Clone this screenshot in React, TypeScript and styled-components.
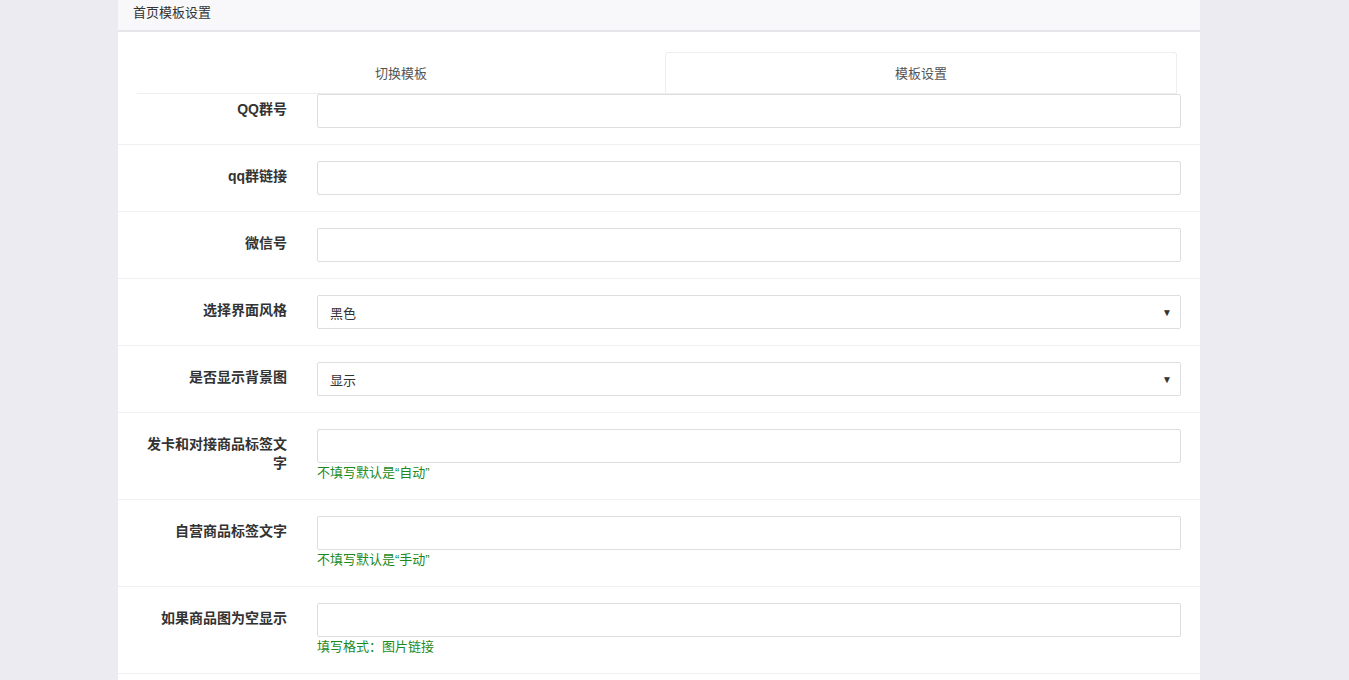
import React from "react";
import styled, { createGlobalStyle } from "styled-components";

const Global = createGlobalStyle`
  html, body { margin: 0; padding: 0; background: #edebf2; }
  body { font-family: "Liberation Sans", "Noto Sans CJK SC", sans-serif; font-size: 13px; color: #333; }
`;

const Panel = styled.div`
  margin-left: 118px;
  width: 1082px;
  background: #fff;
  height: 680px;
  overflow: hidden;
`;
const Header = styled.div`
  height: 30px;
  background: #f8f8fa;
  border-bottom: 2px solid #e6e6ea;
  padding-left: 15px;
  line-height: 25px;
  font-size: 13px;
  color: #333;
`;
const Tabs = styled.div`
  display: flex;
  margin: 20px 23px 0 19px;
  height: 41px;
  border-bottom: 1px solid #eee;
`;
const Tab = styled.div<{ $active?: boolean }>`
  flex: ${(p) => (p.$active ? "1" : "0 0 526px")};
  display: flex;
  align-items: center;
  justify-content: center;
  font-size: 13px;
  color: #555;
  border: 1px solid ${(p) => (p.$active ? "#eee" : "transparent")};
  border-bottom: none;
  border-radius: 3px 3px 0 0;
  padding-bottom: 2px;
`;
const Row = styled.div<{ $first?: boolean }>`
  display: flex;
  align-items: flex-start;
  gap: 30px;
  padding: ${(p) => (p.$first ? "0" : "16px")} 19px 16px;
  border-bottom: 1px solid #f0f0f0;
`;
const Label = styled.div`
  width: 150px;
  flex-shrink: 0;
  text-align: right;
  font-weight: bold;
  color: #333;
  font-size: 14px;
  line-height: 19px;
  padding-top: 6px;
`;
const Field = styled.div`
  flex: 1;
  display: flex;
  flex-direction: column;
`;
const Input = styled.div`
  height: 32px;
  border: 1px solid #ddd;
  border-radius: 2px;
  display: flex;
  align-items: center;
  justify-content: space-between;
  padding: 0 8px 0 12px;
  font-size: 13px;
  color: #333;
`;
const Arrow = styled.span`
  font-size: 10px;
  color: #333;
`;
const Help = styled.div`
  color: #1c8a1c;
  font-size: 13px;
  line-height: 20px;
`;

const rows: { label: string; value?: string; select?: boolean; help?: string }[] = [
  { label: "QQ群号" },
  { label: "qq群链接" },
  { label: "微信号" },
  { label: "选择界面风格", value: "黑色", select: true },
  { label: "是否显示背景图", value: "显示", select: true },
  { label: "发卡和对接商品标签文字", help: "不填写默认是“自动”" },
  { label: "自营商品标签文字", help: "不填写默认是“手动”" },
  { label: "如果商品图为空显示", help: "填写格式：图片链接" },
];

export default function App() {
  return (
    <>
      <Global />
      <Panel>
        <Header>首页模板设置</Header>
        <Tabs>
          <Tab>切换模板</Tab>
          <Tab $active>模板设置</Tab>
        </Tabs>
        {rows.map((r, i) => (
          <Row key={r.label} $first={i === 0}>
            <Label>{r.label}</Label>
            <Field>
              <Input>
                <span>{r.value ?? ""}</span>
                {r.select && <Arrow>▼</Arrow>}
              </Input>
              {r.help && <Help>{r.help}</Help>}
            </Field>
          </Row>
        ))}
      </Panel>
    </>
  );
}
